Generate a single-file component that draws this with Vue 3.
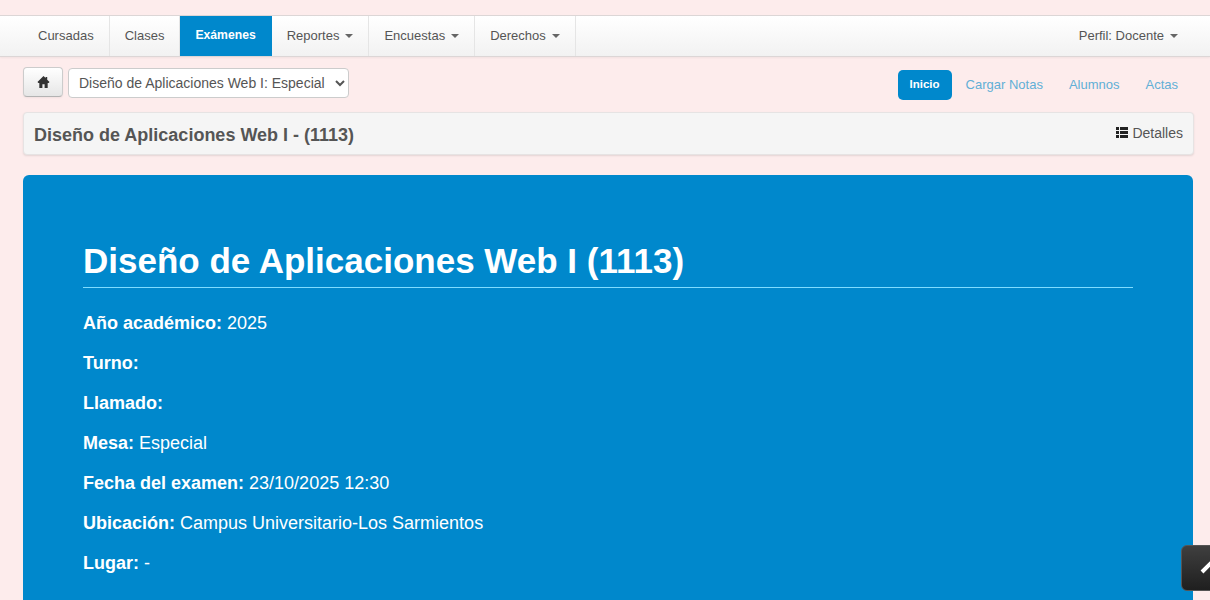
<script setup>
const navItems = [
  { label: 'Cursadas' },
  { label: 'Clases' },
  { label: 'Exámenes', active: true },
  { label: 'Reportes', caret: true },
  { label: 'Encuestas', caret: true },
  { label: 'Derechos', caret: true }
]
const pills = [
  { label: 'Inicio', active: true },
  { label: 'Cargar Notas' },
  { label: 'Alumnos' },
  { label: 'Actas' }
]
const facts = [
  { key: 'Año académico:', value: '2025' },
  { key: 'Turno:', value: '' },
  { key: 'Llamado:', value: '' },
  { key: 'Mesa:', value: 'Especial' },
  { key: 'Fecha del examen:', value: '23/10/2025 12:30' },
  { key: 'Ubicación:', value: 'Campus Universitario-Los Sarmientos' },
  { key: 'Lugar:', value: '-' }
]
</script>

<template>
  <div class="page">
    <nav class="navbar">
      <ul class="nav-list">
        <li v-for="item in navItems" :key="item.label" class="nav-item" :class="{ active: item.active }">
          {{ item.label }}<span v-if="item.caret" class="caret"></span>
        </li>
      </ul>
      <div class="profile">Perfil: Docente<span class="caret"></span></div>
    </nav>

    <main class="content">
      <div class="toolbar">
        <div class="toolbar-left">
          <button class="home-btn" aria-label="Inicio">
            <svg width="13" height="14" viewBox="0 0 14 14">
              <path d="M7 .5.500 7l1 1h1v5.500h3.300V9.500h2.400v4h3.300V8h1l1-1L11 4.500v-3H9.300v1.300z" fill="#333" />
            </svg>
          </button>
          <select class="subject-select">
            <option>Diseño de Aplicaciones Web I: Especial</option>
          </select>
        </div>
        <ul class="pills">
          <li v-for="pill in pills" :key="pill.label" class="pill" :class="{ active: pill.active }">{{ pill.label }}</li>
        </ul>
      </div>

      <div class="subject-bar">
        <h2 class="subject-title">Diseño de Aplicaciones Web I - (1113)</h2>
        <span class="details">
          <svg width="12" height="11" viewBox="0 0 12 11">
            <path d="M0 0h3v3H0zM4 0h8v3H4zM0 4h3v3H0zM4 4h8v3H4zM0 8h3v3H0zM4 8h8v3H4z" fill="#222" />
          </svg>
          Detalles
        </span>
      </div>

      <section class="hero">
        <h1 class="hero-title">Diseño de Aplicaciones Web I (1113)</h1>
        <p v-for="fact in facts" :key="fact.key" class="fact">
          <strong>{{ fact.key }}</strong> {{ fact.value }}
        </p>
      </section>
    </main>

    <div class="to-top">
      <svg width="29" height="44" viewBox="0 0 29 44">
        <path d="M20 26l10-10 10 10" fill="none" stroke="#fff" stroke-width="4" />
      </svg>
    </div>
  </div>
</template>

<style>
html, body {
  margin: 0;
  height: 100%;
  overflow: hidden;
  background: #fdecec;
}
</style>

<style scoped>
.page {
  font-family: "Liberation Sans", Arial, sans-serif;
  font-size: 14px;
  color: #555;
  padding-top: 15px;
}
.navbar {
  display: flex;
  justify-content: space-between;
  align-items: stretch;
  height: 40px;
  padding: 0 17px 0 23px;
  background: linear-gradient(to bottom, #fff, #f2f2f2);
  border-top: 1px solid #dcd6d6;
  border-bottom: 1px solid #dcd6d6;
  box-shadow: 0 1px 2px rgba(0, 0, 0, 0.05);
}
.nav-list {
  display: flex;
  list-style: none;
  margin: 0;
  padding: 0;
}
.nav-item {
  display: flex;
  align-items: center;
  padding: 0 15px 2px;
  font-size: 13px;
  color: #555;
  border-right: 1px solid #e5e5e5;
}
.nav-item.active {
  background: #0088cc;
  color: #fff;
  font-size: 12.200px;
  font-weight: 700;
  border-right-color: #0088cc;
}
.caret {
  display: inline-block;
  width: 0;
  height: 0;
  margin-left: 6px;
  margin-top: 1px;
  border-top: 4px solid #666;
  border-left: 4px solid transparent;
  border-right: 4px solid transparent;
}
.profile {
  display: flex;
  align-items: center;
  font-size: 13px;
  color: #555;
  padding: 0 15px 2px 0;
}
.content {
  padding: 0 17px 0 23px;
}
.toolbar {
  display: flex;
  justify-content: space-between;
  margin-top: 10px;
  height: 34px;
}
.toolbar-left {
  display: flex;
  align-items: flex-start;
  gap: 5px;
}
.home-btn {
  display: flex;
  align-items: center;
  justify-content: center;
  width: 40px;
  height: 30px;
  padding: 0;
  background: linear-gradient(to bottom, #fff, #e6e6e6);
  border: 1px solid #ccc;
  border-bottom-color: #b3b3b3;
  border-radius: 4px;
  box-shadow: 0 1px 2px rgba(0, 0, 0, 0.05);
}
.subject-select {
  width: 281px;
  height: 30px;
  margin-top: 1px;
  padding: 0 4px 0 6px;
  font-family: "Liberation Sans", Arial, sans-serif;
  font-size: 14px;
  color: #555;
  background: #fff;
  border: 1px solid #ccc;
  border-radius: 4px;
}
.pills {
  display: flex;
  list-style: none;
  margin: 3px 3px 0 0;
  padding: 0;
  gap: 2px;
}
.pill {
  display: flex;
  align-items: center;
  box-sizing: border-box;
  height: 30px;
  padding: 0 12px 2px;
  font-size: 13px;
  color: #61afd6;
  border-radius: 5px;
}
.pill.active {
  background: #0088cc;
  color: #fff;
  font-size: 11.500px;
  font-weight: 700;
}
.subject-bar {
  display: flex;
  justify-content: space-between;
  align-items: center;
  box-sizing: border-box;
  width: 1171px;
  height: 43px;
  margin-top: 11px;
  padding: 0 10px;
  background: #f5f5f5;
  border: 1px solid #e6e3e3;
  border-radius: 4px;
  box-shadow: 0 1px 2px rgba(0, 0, 0, 0.1);
}
.subject-title {
  margin: 4px 0 0;
  font-size: 18px;
  font-weight: 700;
  color: #555;
}
.details {
  display: flex;
  align-items: center;
  gap: 4px;
  margin-bottom: 2px;
  font-size: 14px;
  color: #555;
}
.hero {
  box-sizing: border-box;
  width: 1170px;
  height: 600px;
  margin-top: 20px;
  padding: 60px;
  background: #0088cc;
  border-radius: 6px;
  color: #fff;
}
.hero-title {
  margin: 0 0 15px;
  height: 52px;
  font-size: 35px;
  line-height: 52px;
  font-weight: 700;
  border-bottom: 1px solid #7fdcff;
}
.fact {
  margin: 0;
  font-size: 18px;
  line-height: 40px;
}
.to-top {
  position: fixed;
  left: 1181px;
  top: 545px;
  width: 40px;
  height: 44px;
  background: linear-gradient(to bottom, #3f3f3f, #1f1f1f);
  border: 1px solid #555;
  border-radius: 6px 0 0 6px;
  overflow: hidden;
}
</style>
